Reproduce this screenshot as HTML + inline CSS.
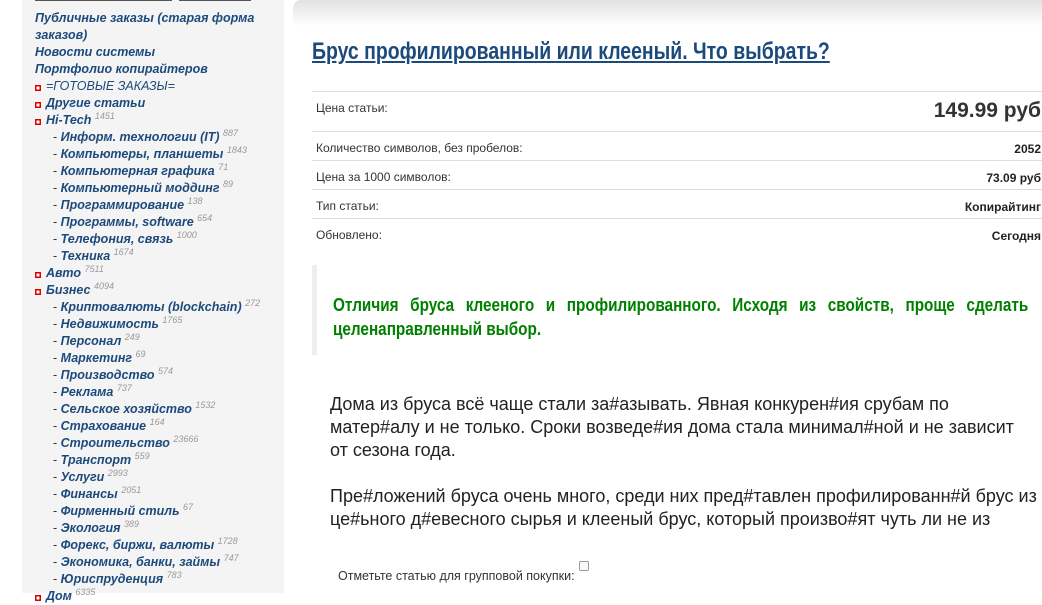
<!DOCTYPE html>
<html><head><meta charset="utf-8">
<style>
*{margin:0;padding:0;box-sizing:border-box}
body{width:1042px;height:593px;overflow:hidden;background:#fff;font-family:"Liberation Sans",sans-serif;position:relative}
#side{position:absolute;left:22px;top:0;width:262px;height:593px;background:#f4f4f4}
#side .bars{position:absolute;top:0;left:13px;width:137px;height:1px;border-top:1px solid #555}
#side .bars2{position:absolute;top:0;left:157px;width:72px;border-top:1px solid #555}
#side ul{list-style:none;position:absolute;left:13px;top:10px;width:245px}
#side li{font:italic bold 12.5px/17px "Liberation Sans",sans-serif;color:#1d4a7c;white-space:nowrap}
#side li.b{position:relative;padding-left:11px}
#side li.b:before{content:"";position:absolute;left:0;top:7px;width:6px;height:6px;background:#d00;box-shadow:inset 0 0 0 1.5px #d00,inset 0 0 0 3px #fff}
#side li.s{padding-left:18px}
#side li.s .d{font-style:normal;font-weight:normal;color:#333}
#side sup{font-size:9px;font-weight:normal;color:#999;vertical-align:5px;line-height:0}
#topbar{position:absolute;left:293px;top:0;width:749px;height:26px;border-radius:8px 0 0 0;background:linear-gradient(#e2e2e2,#fff)}
h1{position:absolute;left:312px;top:38px;font-size:24px;font-weight:bold;color:#1d4a7c;text-decoration:underline;white-space:nowrap;transform:scaleX(0.81);transform-origin:left top}
table{position:absolute;left:312px;top:91px;width:730px;border-collapse:collapse}
td{border-top:1px solid #ddd;height:29px;font-size:12px;color:#333;vertical-align:top;padding-top:9px;padding-left:4px}
td.v{text-align:right;font-weight:bold;font-size:12px;color:#222;padding-top:10px;padding-right:1px}
tr.first td{height:40px}
tr.first td.v{font-size:21px;padding-top:7px;font-weight:bold;color:#333}
#bq{position:absolute;left:312px;top:265px;width:730px;height:90px;border-left:5px solid #eee}
#bq p{position:absolute;left:16px;top:28px;width:818px;font-size:18px;line-height:24px;font-weight:bold;color:#008000;text-align:justify;transform:scaleX(0.85);transform-origin:left top}
.txt{position:absolute;left:330px;width:740px;font-size:18px;line-height:23px;color:#222;white-space:nowrap}
#chk{position:absolute;left:338px;top:569px;font-size:12.5px;color:#333}
#chk span{display:inline-block;width:10px;height:10px;border:1px solid #999;border-radius:2px;position:relative;top:-9px;left:4px;background:#fafafa}
</style></head><body>
<div id="side"><div class="bars"></div><div class="bars2"></div>
<ul>
<li>Публичные заказы (старая форма<br>заказов)</li>
<li>Новости системы</li>
<li>Портфолио копирайтеров</li>
<li class="b" style="font-weight:normal">=ГОТОВЫЕ ЗАКАЗЫ=</li>
<li class="b">Другие статьи</li>
<li class="b">Hi-Tech <sup>1451</sup></li>
<li class="s"><span class="d">- </span>Информ. технологии (IT) <sup>887</sup></li>
<li class="s"><span class="d">- </span>Компьютеры, планшеты <sup>1843</sup></li>
<li class="s"><span class="d">- </span>Компьютерная графика <sup>71</sup></li>
<li class="s"><span class="d">- </span>Компьютерный моддинг <sup>89</sup></li>
<li class="s"><span class="d">- </span>Программирование <sup>138</sup></li>
<li class="s"><span class="d">- </span>Программы, software <sup>654</sup></li>
<li class="s"><span class="d">- </span>Телефония, связь <sup>1000</sup></li>
<li class="s"><span class="d">- </span>Техника <sup>1674</sup></li>
<li class="b">Авто <sup>7511</sup></li>
<li class="b">Бизнес <sup>4094</sup></li>
<li class="s"><span class="d">- </span>Криптовалюты (blockchain) <sup>272</sup></li>
<li class="s"><span class="d">- </span>Недвижимость <sup>1765</sup></li>
<li class="s"><span class="d">- </span>Персонал <sup>249</sup></li>
<li class="s"><span class="d">- </span>Маркетинг <sup>69</sup></li>
<li class="s"><span class="d">- </span>Производство <sup>574</sup></li>
<li class="s"><span class="d">- </span>Реклама <sup>737</sup></li>
<li class="s"><span class="d">- </span>Сельское хозяйство <sup>1532</sup></li>
<li class="s"><span class="d">- </span>Страхование <sup>164</sup></li>
<li class="s"><span class="d">- </span>Строительство <sup>23666</sup></li>
<li class="s"><span class="d">- </span>Транспорт <sup>559</sup></li>
<li class="s"><span class="d">- </span>Услуги <sup>2993</sup></li>
<li class="s"><span class="d">- </span>Финансы <sup>2051</sup></li>
<li class="s"><span class="d">- </span>Фирменный стиль <sup>67</sup></li>
<li class="s"><span class="d">- </span>Экология <sup>389</sup></li>
<li class="s"><span class="d">- </span>Форекс, биржи, валюты <sup>1728</sup></li>
<li class="s"><span class="d">- </span>Экономика, банки, займы <sup>747</sup></li>
<li class="s"><span class="d">- </span>Юриспруденция <sup>783</sup></li>
<li class="b">Дом <sup>6335</sup></li>
</ul></div>
<div id="topbar"></div>
<h1>Брус профилированный или клееный. Что выбрать?</h1>
<table>
<tr class="first"><td>Цена статьи:</td><td class="v">149.99 руб</td></tr>
<tr><td>Количество символов, без пробелов:</td><td class="v">2052</td></tr>
<tr><td>Цена за 1000 символов:</td><td class="v">73.09 руб</td></tr>
<tr><td>Тип статьи:</td><td class="v">Копирайтинг</td></tr>
<tr><td>Обновлено:</td><td class="v">Сегодня</td></tr>
</table>
<div id="bq"><p>Отличия бруса клееного и профилированного. Исходя из свойств, проще сделать целенаправленный выбор.</p></div>
<div class="txt" style="top:393px">Дома из бруса всё чаще стали за#азывать. Явная конкурен#ия срубам по<br>матер#алу и не только. Сроки возведе#ия дома стала минимал#ной и не зависит<br>от сезона года.</div>
<div class="txt" style="top:485px">Пре#ложений бруса очень много, среди них пред#тавлен профилированн#й брус из<br>це#ьного д#евесного сырья и клееный брус, который произво#ят чуть ли не из</div>
<div id="chk">Отметьте статью для групповой покупки:<span></span></div>
</body></html>
